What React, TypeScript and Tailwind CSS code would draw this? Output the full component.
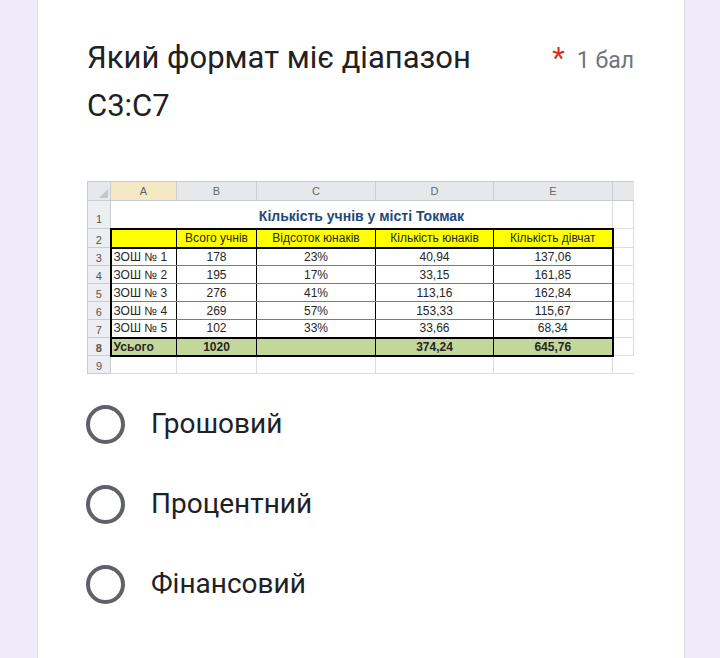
import React from 'react';

interface RowData {
  school: string;
  total: string;
  percent: string;
  boys: string;
  girls: string;
}

const rows: RowData[] = [
  { school: 'ЗОШ № 1', total: '178', percent: '23%', boys: '40,94', girls: '137,06' },
  { school: 'ЗОШ № 2', total: '195', percent: '17%', boys: '33,15', girls: '161,85' },
  { school: 'ЗОШ № 3', total: '276', percent: '41%', boys: '113,16', girls: '162,84' },
  { school: 'ЗОШ № 4', total: '269', percent: '57%', boys: '153,33', girls: '115,67' },
  { school: 'ЗОШ № 5', total: '102', percent: '33%', boys: '33,66', girls: '68,34' },
];

const options = ['Грошовий', 'Процентний', 'Фінансовий'];

const rowNum = 'bg-[#eceef1] text-[11px] text-[#555] text-center align-bottom pb-[1px] border border-[#c9ccd0] p-0 leading-none';
const colHead = 'bg-[#e6e8eb] text-[11px] text-[#666] font-normal text-center border border-[#c9ccd0] p-0 leading-none';
const grid = 'border-b border-r border-[#dcdde0] p-0';
const cell = 'border-x border-black border-b border-b-[#7a7a7a] p-0 text-center leading-none';

const Sheet: React.FC = () => (
  <table
    className="w-[546px] table-fixed border-collapse text-[12px] text-[#262626]"
    style={{ fontFamily: '"Liberation Sans", Arial, sans-serif' }}
  >
    <colgroup>
      <col className="w-[23px]" />
      <col className="w-[66px]" />
      <col className="w-[80px]" />
      <col className="w-[119px]" />
      <col className="w-[118px]" />
      <col className="w-[119px]" />
      <col className="w-[21px]" />
    </colgroup>
    <tbody>
      <tr className="h-[19px]">
        <th className="bg-[#e6e8eb] border border-[#c9ccd0] p-0 align-bottom">
          <div className="flex justify-end pr-[2px] pb-[2px]">
            <svg width="9" height="9" viewBox="0 0 9 9">
              <path d="M9 0 L9 9 L0 9 Z" fill="#c3c6ca" />
            </svg>
          </div>
        </th>
        <th className="bg-[#f5e8c4] text-[11px] text-[#666] font-normal text-center border border-[#c9ccd0] p-0 leading-none">A</th>
        <th className={colHead}>B</th>
        <th className={colHead}>C</th>
        <th className={colHead}>D</th>
        <th className={colHead}>E</th>
        <th className="bg-[#e6e8eb] border-y border-l border-[#c9ccd0] p-0" />
      </tr>
      <tr className="h-[28px]">
        <td className={rowNum + ' pb-[3px]'}>1</td>
        <td
          colSpan={5}
          className="p-0 pb-[5px] align-bottom text-center text-[14px] font-bold text-[#1f497d] leading-none"
        >
          Кількість учнів у місті Токмак
        </td>
        <td className={grid + ' border-l'} />
      </tr>
      <tr className="h-[19px] bg-[#ffff00]">
        <td className={rowNum + ' bg-[#eceef1]'}>2</td>
        <td className="border-2 border-r border-black p-0" />
        <td className="border-y-2 border-x border-black p-0 text-center leading-none">Всого учнів</td>
        <td className="border-y-2 border-x border-black p-0 text-center leading-none">Відсоток юнаків</td>
        <td className="border-y-2 border-x border-black p-0 text-center leading-none">Кількість юнаків</td>
        <td className="border-y-2 border-r-2 border-l border-black p-0 text-center leading-none">Кількість дівчат</td>
        <td className={grid + ' bg-white'} />
      </tr>
      {rows.map((r, i) => (
        <tr key={r.school} className="h-[18px]">
          <td className={rowNum}>{i + 3}</td>
          <td className={cell + ' border-l-2 text-left pl-[2px]'}>{r.school}</td>
          <td className={cell}>{r.total}</td>
          <td className={cell}>{r.percent}</td>
          <td className={cell}>{r.boys}</td>
          <td className={cell + ' border-r-2'}>{r.girls}</td>
          <td className={grid} />
        </tr>
      ))}
      <tr className="h-[18px] bg-[#c4d79b] font-bold">
        <td className={rowNum}>8</td>
        <td className="border-2 border-r border-black p-0 pl-[2px] text-left leading-none">Усього</td>
        <td className="border-y-2 border-x border-black p-0 text-center leading-none">1020</td>
        <td className="border-y-2 border-x border-black p-0" />
        <td className="border-y-2 border-x border-black p-0 text-center leading-none">374,24</td>
        <td className="border-y-2 border-r-2 border-l border-black p-0 text-center leading-none">645,76</td>
        <td className={grid + ' bg-white'} />
      </tr>
      <tr className="h-[18px]">
        <td className={rowNum}>9</td>
        <td className={grid} />
        <td className={grid} />
        <td className={grid} />
        <td className={grid} />
        <td className={grid} />
        <td className="border-b border-[#dcdde0] p-0" />
      </tr>
    </tbody>
  </table>
);

const RadioOption: React.FC<{ label: string }> = ({ label }) => (
  <div className="flex h-[80px] items-center">
    <span className="ml-[-1px] h-[39px] w-[39px] shrink-0 rounded-full border-[4px] border-[#5f6368]" />
    <span className="ml-[26px] text-[28px] text-[#202124]">{label}</span>
  </div>
);

export default function App() {
  return (
    <div
      className="h-[658px] overflow-hidden bg-[#f0ebf8] pl-[37px] pr-[35px]"
      style={{ fontFamily: 'Roboto, "Noto Sans", sans-serif' }}
    >
      <div className="h-full border-x border-[#dadce0] bg-white pl-[49px] pr-[50px] pt-[34px]">
        <div className="flex items-baseline">
          <h1 className="w-[430px] text-[31px] font-normal leading-[48px] text-[#202124]">
            Який формат міє діапазон C3:C7
          </h1>
          <div className="ml-auto flex shrink-0 items-baseline">
            <span className="text-[29px] text-[#d93025]">*</span>
            <span className="ml-[12px] text-[23px] text-[#70757a]">1 бал</span>
          </div>
        </div>

        <div className="mt-[51px]">
          <Sheet />
        </div>

        <div className="mt-[10px]">
          {options.map((o) => (
            <RadioOption key={o} label={o} />
          ))}
        </div>
      </div>
    </div>
  );
}
